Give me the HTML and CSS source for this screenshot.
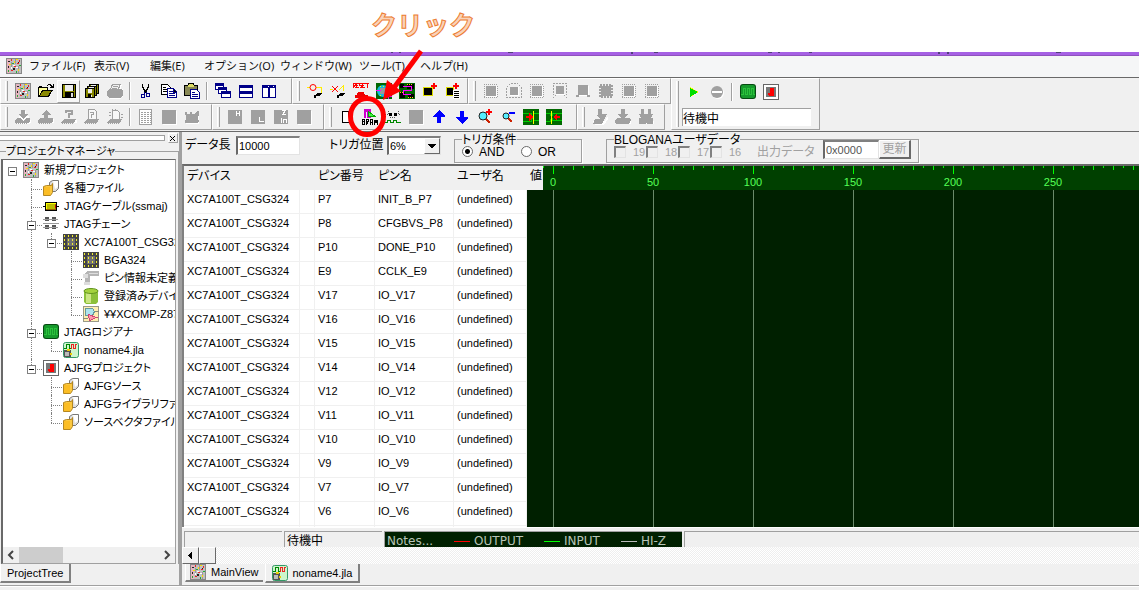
FILE: index.html
```html
<!DOCTYPE html>
<html lang="ja">
<head>
<meta charset="utf-8">
<title>JTAG ロジアナ</title>
<link rel="stylesheet" href="styles.css">
</head>
<body>
<svg class="defs" aria-hidden="true">
  <symbol id="board" viewBox="0 0 16 16"><path fill="#888" d="M0 0h16v16H0z"/><path fill="#c0c0c0" d="M1 1h14v14H1z"/><path fill="#e6b4bf" d="M1 1h3v14H1z"/><path fill="#999" d="M5 4h1v8H5zM9 1h1v5H9zM12 8h1v7h-1z"/><path fill="#e22" d="M5 1h1v2H5zM11 5h2v1h-2zM5 12h2v1H5zM8 8h2v1H8zM13 2h1v2h-1z"/><path fill="#fd0" d="M8 3h1v2H8zM3 6h2v1H3zM12 11h1v2h-1zM10 1h2v1h-2z"/><path fill="#2a3" d="M2 12h1v2H2zM10 13h1v2h-1zM6 5h2v1H6zM13 7h2v1h-2z"/><path fill="#222" d="M2 3h2v1H2zM2 8h1v2H2zM7 10h2v2H7zM12 4h1v1h-1z"/><path fill="#fff" d="M7 7h2v1H7zM10 9h2v1h-2zM5 9h1v2H5z"/></symbol>
  <symbol id="open" viewBox="0 0 16 16"><path fill="#000" d="M0 4h1V3h3v1h6v3h5v1h-1v1h-1v2h-1v2h-1v1H0zM9 2h1V1h3v1h1v1h1V1h1v4h-4V4h1V3h-1V2h-2v1H9z"/><path fill="#ff9" d="M1 5h8v2H4v1H3v2H2v2H1z"/><path fill="#880" d="M5 8h8l-3 5H2z"/></symbol>
  <symbol id="save" viewBox="0 0 16 16"><path fill="#000" d="M1 1h14v14H1z"/><path fill="#880" d="M2 2h12v12H2z"/><path fill="#eee" d="M4 2h8v6H4z"/><path fill="#000" d="M4 9h9v6H4zM12 2h1v6h-1z"/><path fill="#ddd" d="M10 10h2v4h-2z"/></symbol>
  <symbol id="saveall" viewBox="0 0 16 16"><path fill="#000" d="M5 1h10v10H5zM3 3h10v10H3zM1 5h10v10H1z"/><path fill="#880" d="M6 2h1v1H6zM13 2h1v8h-1zM4 4h1v1H4zM11 4h1v8h-1zM2 6h8v8H2z"/><path fill="#eee" d="M7 2h5v1H7zM5 4h5v1H5zM4 6h4v4H4zM7 12h1v2H7z"/><path fill="#000" d="M4 11h3v3H4z"/></symbol>
  <symbol id="print" viewBox="0 0 16 16"><path fill="#fff" d="M5 2h10v1h-1v3h2v8h-2v2H3z"/><path fill="#a0a0a0" d="M5 1h9l-2 5h3l1 2v5l-2 1-1 1H2l-2-2V8l2-2h1z"/><path fill="#f0f0f0" d="M6 2h6l-1 4H4z"/><path fill="#a0a0a0" d="M6 3h5v1H6zM5 5h5v1H5z"/></symbol>
  <symbol id="cut" viewBox="0 0 16 16"><path fill="#000" d="M4 1h1v3h1v2h1v1h1V6h1V4h1V1h1v4h-1v2H9v2H8v1H7V9H6V7H5V5H4z"/><path fill="none" stroke="#008" d="M6.500 9v2.500h-3v3h3v-3M8.500 9v1.500h3v3h-3v-3"/></symbol>
  <symbol id="copy" viewBox="0 0 16 16"><path fill="#fff" stroke="#000" d="M.5 1.500h6l3 3v7h-9z"/><path fill="#fff" stroke="#008" d="M6.500 5.500h6l3 3v6h-9z"/><path stroke="#000" d="M2 4.500h3M2 6.500h4M2 8.500h4"/><path stroke="#008" d="M8 8.500h4M8 10.500h6M8 12.500h6M12.500 6v3h3"/></symbol>
  <symbol id="paste" viewBox="0 0 16 16"><path fill="#000" d="M0 2h4V0h6v2h4v11H0z"/><path fill="#885" d="M1 3h12v9H1z"/><path fill="#dd6" d="M5 1h4v1h1v2H4V2h1z"/><path fill="#fff" stroke="#008" d="M6.500 6.500h6l3 3v6h-9z"/><path stroke="#008" d="M8 9.500h3M8 11.500h6M8 13.500h6"/></symbol>
  <symbol id="cascade" viewBox="0 0 16 16"><path fill="#fff" stroke="#008" d="M.5.5h8v6h-8zM3.500 4.500h8v6h-8zM6.500 8.500h9v6h-9z"/><path fill="#008" d="M0 0h9v3H0zM3 4h9v3H3zM6 8h10v3H6z"/></symbol>
  <symbol id="tileh" viewBox="0 0 16 16"><path fill="#008" d="M1 2h14v13H1z"/><path fill="#fff" d="M2 5h12v3H2zM2 11h12v3H2z"/></symbol>
  <symbol id="tilev" viewBox="0 0 16 16"><path fill="#008" d="M1 2h14v13H1z"/><path fill="#fff" d="M2 5h5v9H2zM9 5h5v9H9zM7 3h1v1H7zM12 3h1v1h-1z"/></symbol>
  <symbol id="probe" viewBox="0 0 16 16"><path fill="none" stroke="#fe0" d="M0 4.500h14v5"/><circle class="soft" cx="6" cy="4.500" r="3" fill="#f4efe8" stroke="#f00"/><path d="M7 13l3-3h5l-3 3zM7 12h2v3H7z"/></symbol>
  <symbol id="unprobe" viewBox="0 0 16 16"><path fill="none" stroke="#fe0" d="M0 6.500h3M9 7l4-4v5"/><path stroke="#f00" d="M2 3l6 6M8 3L2 9"/><path d="M7 13l3-3h5l-3 3zM7 12h2v3H7z"/></symbol>
  <symbol id="reset" viewBox="0 0 16 16"><path fill="none" stroke="#f00" d="M.5 5V.5h2v2h-2M1.500 3l1 2M5.500.5h-2v4h2M4 2.500h1M8.500.5h-2v2h2v2h-2M11.500.5h-2v4h2M10 2.500h1M12 .5h4M14.500 1v4"/><path fill="#e00" d="M5 9h6l1 3h3v3H2v-3h2z"/></symbol>
  <symbol id="chipscan" viewBox="0 0 16 16"><path fill="#060" d="M0 0h16v16H0z"/><circle class="soft" cx="7" cy="8" r="6" fill="#1bd"/><path fill="#999" d="M4 5h6v6H4z"/><path fill="#ff0" d="M4 3h1v1H4zM7 3h1v1H7zM10 3h1v1h-1zM4 12h1v1H4zM8 12h1v1H8z"/><path fill="none" stroke="#f0f" d="M0 7.500h5M12.500 16v-3h3"/></symbol>
  <symbol id="chiproute" viewBox="0 0 16 16"><path fill="#060" d="M0 0h16v16H0z"/><path d="M1 1h4v4H1zM8 1h7v5H8zM1 9h5v6H1zM9 11h6v4H9z"/><path fill="none" stroke="#f0f" d="M4 3.500h8.500v4h-8v4H12"/><path fill="#fd0" d="M8 1h1v1H8zM10 1h1v1h-1zM12 1h1v1h-1zM1 9h1v1H1zM3 9h1v1H3zM9 14h1v1H9zM11 14h1v1h-1zM13 14h1v1h-1z"/></symbol>
  <symbol id="addchip" viewBox="0 0 16 16"><path fill="#dd0" d="M1 4h10v9H1z"/><path d="M2 5h8v7H2z"/><path fill="#f00" d="M11 0h2v2h2v2h-2v2h-2V4H9V2h2z"/></symbol>
  <symbol id="addlist" viewBox="0 0 16 16"><path fill="#dd0" d="M1 4h8v9H1z"/><path d="M2 5h6v7H2z"/><path fill="#f00" d="M10 0h2v2h2v2h-2v2h-2V4H8V2h2z"/><path fill="#fff" d="M8 7h7v9H8z"/><path stroke="#000" d="M9 8.500h5M9 10.500h5M9 12.500h5M9 14.500h5"/></symbol>
  <symbol id="gchip" viewBox="0 0 16 16"><path fill="none" stroke="#fff" d="M3 13.500h11M13.500 3v11"/><path fill="#a0a0a0" d="M3 3h10v10H3z"/><path fill="none" stroke="#a0a0a0" stroke-dasharray="1 1" d="M1 1.500h14M1 14.500h14M1.500 3v11M14.500 3v11"/></symbol>
  <symbol id="gchip2" viewBox="0 0 16 16"><path fill="#a0a0a0" d="M4 4h8v8H4z"/><path fill="none" stroke="#a0a0a0" stroke-dasharray="2 1" d="M4.500.5h7l4 4v10H.5v-10z"/><path fill="none" stroke="#fff" d="M4 12.500h8.500V4"/></symbol>
  <symbol id="gchip3" viewBox="0 0 16 16"><path fill="#a0a0a0" d="M4 3h8v8H4z"/><path fill="none" stroke="#a0a0a0" stroke-dasharray="2 1" d="M1 .5h14M.5 15.500L5 11M1.500 2v10M15.500 15.500L11 11M14.500 2v10"/><path stroke="#fff" d="M4 11.500h9"/></symbol>
  <symbol id="gchip4" viewBox="0 0 16 16"><path fill="#a0a0a0" d="M3 2h10v10H3zM1 12h3v2H1zM12 12h3v2h-3z"/><path stroke="#fff" d="M4 12.500h8M13.500 3v9"/></symbol>
  <symbol id="gchip5" viewBox="0 0 16 16"><path fill="none" stroke="#a0a0a0" stroke-width="2" stroke-dasharray="2 1" d="M2 2h12v12H2z"/><path fill="#a0a0a0" d="M3 3h10v10H3z"/></symbol>
  <symbol id="down" viewBox="0 0 16 16"><path fill="#fff" d="M7 2h4v5h3v1l-3 3h5v3l-2 1H2v-3z"/><path fill="#a0a0a0" d="M6 1h4v4h3L8 10 3 5h3zM2 9h3l3 3 3-3h4v3l-2 2H0v-3z"/><path stroke="#a0a0a0" stroke-dasharray="1 1" d="M1 14.500h12"/></symbol>
  <symbol id="up" viewBox="0 0 16 16"><path fill="#fff" d="M2 10h14v4H2z"/><path fill="#a0a0a0" d="M6 11V6H3l5-5 5 5h-3v5zM2 9h13v3l-2 2H0v-3z"/><path stroke="#a0a0a0" stroke-dasharray="1 1" d="M1 14.500h12"/></symbol>
  <symbol id="ask" viewBox="0 0 16 16"><path fill="#fff" d="M3 11h13v3H3z"/><path fill="none" stroke="#a0a0a0" stroke-width="2" d="M5 4V2h6v3H8v4"/><path fill="#a0a0a0" d="M3 10h12l-2 4H0z"/><path stroke="#a0a0a0" stroke-dasharray="1 1" d="M1 14.500h12"/></symbol>
  <symbol id="askdoc" viewBox="0 0 16 16"><path fill="#f7f7f7" stroke="#a0a0a0" d="M4.500.5h6l2 2v8h-8z"/><path fill="none" stroke="#a0a0a0" d="M6 3.500h3.500v2h-2V9"/><path fill="#a0a0a0" d="M3 10h12l-2 4H0z"/><path stroke="#a0a0a0" stroke-dasharray="1 1" d="M1 14.500h12"/></symbol>
  <symbol id="bug" viewBox="0 0 16 16"><path fill="#f7f7f7" stroke="#a0a0a0" d="M5.500 1.500h5l2 2v7h-7z"/><path stroke="#a0a0a0" d="M2 3.500h2M2 6.500h2M14 5.500h2M14 8.500h2M5 .5h1M8 .5h1"/><path fill="#a0a0a0" d="M3 10h12l-2 4H0z"/><path stroke="#a0a0a0" stroke-dasharray="1 1" d="M1 14.500h12"/></symbol>
  <symbol id="sheet" viewBox="0 0 16 16"><path fill="#fff" stroke="#a0a0a0" d="M1.500.5h12v15h-12z"/><path stroke="#a0a0a0" stroke-dasharray="2 1" d="M3 3.500h10M3 5.500h10M3 7.500h10M3 9.500h10M3 11.500h10M3 13.500h10"/></symbol>
  <symbol id="box" viewBox="0 0 16 16"><path fill="#fff" d="M2 2h14v14H2z"/><path fill="#a0a0a0" d="M1 1h14v14H1z"/></symbol>
  <symbol id="boxh" viewBox="0 0 16 16"><path fill="#a0a0a0" d="M1 1h14v14H1z"/><path fill="none" stroke="#fff" d="M9.500 2v5M12.500 2v5M10 4.500h2"/></symbol>
  <symbol id="boxl" viewBox="0 0 16 16"><path fill="#a0a0a0" d="M1 1h14v14H1z"/><path fill="none" stroke="#fff" d="M9.500 8v4.500h4"/></symbol>
  <symbol id="boxz" viewBox="0 0 16 16"><path fill="#a0a0a0" d="M1 1h14v14H1z"/><path fill="none" stroke="#fff" d="M9 1.500h3.500L9.500 5.500H13M8.500 9v5M10.500 14v-3.500h3V14"/></symbol>
  <symbol id="scrap" viewBox="0 0 16 16"><path fill="#fff" d="M2 5h13v10H2z"/><path fill="#a0a0a0" d="M1 3h2v2h3V3h2v2h2l4-3h1v3l-1 4 1 4-2 1H1l1-6z"/></symbol>
  <symbol id="page" viewBox="0 0 16 16"><path fill="#fff" stroke="#000" d="M3.500 2.500h6l3 3v8h-9z"/><path fill="none" stroke="#000" d="M9.500 3v3h3"/></symbol>
  <symbol id="bram" viewBox="0 0 16 16"><path fill="#c0c" d="M2 0h7v9H2z"/><path fill="#eef" d="M4 3h1v6H4z"/><path fill="#4e4" stroke="#0a0" d="M6.500 2.500L13 7.500H6.500z"/><path fill="none" stroke="#000" d="M.5 16v-5.500h2v2h-2 2v3H.5M4.500 16v-5.500h2v2h-2l2 3M8.500 16v-5.500h2V16M9 13.500h1M12.500 16v-5h1v2h1v-2h1v5"/></symbol>
  <symbol id="wave" viewBox="0 0 16 16"><path d="M4 4h3v3H4zM9 4h3v3H9z"/><path fill="none" stroke="#555" stroke-dasharray="1 1" d="M0 5.500h3V2M13 2v3.500h3M5 8.500h6"/><path fill="none" stroke="#080" d="M0 13.500h2.500v-2h3v2h3v-2h3v2h4.500"/></symbol>
  <symbol id="aup" viewBox="0 0 16 16"><path fill="#00f" d="M8 1l6 6v1h-4v6H6V8H2V7z"/></symbol>
  <symbol id="adown" viewBox="0 0 16 16"><path fill="#00f" d="M8 15L2 9V8h4V2h4v6h4v1z"/></symbol>
  <symbol id="zin" viewBox="0 0 16 16"><path stroke="#c20" stroke-width="2" d="M8 9l5 5"/><circle class="soft" cx="6" cy="7" r="4" fill="#5ef" stroke="#222"/><path fill="#f00" d="M11 0h2v2h2v2h-2v2h-2V4H9V2h2z"/></symbol>
  <symbol id="zout" viewBox="0 0 16 16"><path stroke="#c20" stroke-width="2" d="M8 9l4 4"/><circle class="soft" cx="6" cy="7" r="3" fill="#5ef" stroke="#222"/><path fill="#00f" d="M9 3h6v2H9z"/></symbol>
  <symbol id="gor" viewBox="0 0 16 16"><path fill="#006800" d="M0 0h16v16H0z"/><path fill="none" stroke="#0c0" d="M0 4.500h8l3 7h5M0 12.500h8l3-8h5"/><path fill="#ff0" d="M10 2h1v13h-1z"/><path fill="#f00" d="M3 7h3V4l4 4-4 4V9H3z"/></symbol>
  <symbol id="gol" viewBox="0 0 16 16"><path fill="#006800" d="M0 0h16v16H0z"/><path fill="none" stroke="#0c0" d="M0 4.500h4l3 7h9M0 12.500h4l3-8h9"/><path fill="#ff0" d="M5 2h1v13H5z"/><path fill="#f00" d="M14 7h-3V4L7 8l4 4V9h3z"/></symbol>
  <symbol id="dl1" viewBox="0 0 16 16"><path fill="#fff" d="M1 12h12l3-5v3l-4 6H3z"/><path fill="#a0a0a0" d="M6 0h4v5h5l-4 8-2 2H1l2-5h6L4 6h2z"/></symbol>
  <symbol id="dl2" viewBox="0 0 16 16"><path fill="#fff" d="M2 12h14v3H2z"/><path fill="#a0a0a0" d="M6 0h4v5h3l-3 4h4l2 2-2 4H1l-1-3 2-3h4L3 5h3z"/></symbol>
  <symbol id="dl3" viewBox="0 0 16 16"><path fill="#fff" d="M2 12h14v3H2z"/><path fill="#a0a0a0" d="M3 0h3v5h4V0h3v5h2l-2 4h2v6H9l-1-1-1 1H1V9h2L1 5h2z"/></symbol>
  <symbol id="play" viewBox="0 0 16 16"><path fill="#ff0" d="M4 3v10l9-5z"/><path fill="#0d0" d="M4 4v9l8-5z"/></symbol>
  <symbol id="stop" viewBox="0 0 16 16"><circle class="soft" cx="9" cy="9" r="6" fill="#fff"/><circle class="soft" cx="8" cy="8" r="6" fill="#a0a0a0"/><path fill="#fff" d="M3 7h10v2H3z"/></symbol>
  <symbol id="ana" viewBox="0 0 16 16"><rect class="soft" width="16" height="15" rx="3" fill="#054a10"/><rect class="soft" x="1" y="1" width="14" height="13" rx="2" fill="#169a2c"/><path fill="none" stroke="#2bc23c" d="M1 10.500h2.500v-6h2v6h2v-6h2v6h2v-6h2v6H15"/></symbol>
  <symbol id="ajfg" viewBox="0 0 16 16"><path fill="#fff" stroke="#666" d="M.5.5h15v15H.5z"/><path fill="#777" d="M3 3h10v10H3z"/><path fill="#f00" d="M7 4h4v7l-1 1H6l-1-1V9h2z"/></symbol>
  <symbol id="files" viewBox="0 0 16 16"><g class="soft"><path fill="#ddd" stroke="#777" d="M6.500 2.500l3-2h6v8l-3 3h-6z"/><path fill="#fff" d="M10 1h5v6l-3 2z"/><path fill="#fbc840" stroke="#b58720" d="M.5 6.500l3-1h5l1-2v9l-2 3h-7z"/><path fill="#fbbd25" d="M1 7h6v8H1z"/></g></symbol>
  <symbol id="cable" viewBox="0 0 16 16"><path stroke="#000" d="M0 8.500h16"/><path fill="#960" stroke="#000" d="M2.500 4.500h11v8h-11z"/><path fill="#bb0" d="M4 6h8v5H4z"/><path fill="#ff0" d="M3 5h10v1H3zM3 6h1v5H3z"/><path fill="#c00" d="M12 7h1v3h-1z"/></symbol>
  <symbol id="chain" viewBox="0 0 16 16"><path fill="#555" d="M2 1h4v4H2zM9 1h4v4H9zM2 9h4v4H2zM9 9h4v4H9z"/><path fill="none" stroke="#999" d="M0 3.500h15M0 7.500h15.500M0 11.500h15"/></symbol>
  <symbol id="bga" viewBox="0 0 16 16"><path fill="#444" d="M0 0h16v16H0z"/><path fill="#707070" d="M4 4h8v8H4z"/><path fill="#f2ee30" d="M1 1h1v2H1zM5 1h1v2H5zM9 1h1v2H9zM13 1h1v2h-1zM1 5h1v2H1zM5 5h1v2H5zM9 5h1v2H9zM13 5h1v2h-1zM1 9h1v2H1zM5 9h1v2H5zM9 9h1v2H9zM13 9h1v2h-1zM1 13h1v2H1zM5 13h1v2H5zM9 13h1v2H9zM13 13h1v2h-1z"/></symbol>
  <symbol id="pin" viewBox="0 0 16 16"><path fill="#b5b5b5" d="M2 3l2-2h12v5H7v8H2z"/><path fill="#ddd" d="M0 4h5v4H0zM1 12h6v3H1zM6 3h9v1H6z"/></symbol>
  <symbol id="db" viewBox="0 0 16 16"><g class="soft"><path fill="#8cc03a" d="M1 2h14v12l-2 2H3l-2-2z"/><path fill="#cbe584" d="M3 4h5v11H3z"/><ellipse cx="8" cy="3" rx="7" ry="2.500" fill="#a4d23e" stroke="#639420"/></g></symbol>
  <symbol id="share" viewBox="0 0 16 16"><path fill="#ffeeb0" stroke="#998" d="M.5.5h15v15H.5z"/><path fill="#aee4ef" stroke="#699" d="M2.500 2.500h7l2 3-2 4h-7z"/><path fill="#f9a" stroke="#c47" d="M5.500 8.500l8 3-7 3z"/><path fill="none" stroke="#887" d="M12 5.500h4M0 12.500h5"/></symbol>
  <symbol id="jla" viewBox="0 0 16 16"><rect class="soft" x=".5" y=".5" width="15" height="15" rx="2" fill="#cdf5cc" stroke="#396"/><path fill="none" stroke="#080" d="M1 6.500h2v-4h3v4h2"/><path fill="none" stroke="#e22" d="M8 6.500v-4h2v4h2v-4h2"/><path fill="#555" d="M1 8h7v7H1z"/><path fill="#bbb" d="M2 10h4v4H2z"/><path fill="#ec0" d="M4 7h3v2H4zM7 11h2v2H7z"/></symbol>
</svg>

<header class="lead">
  <strong class="callout">クリック</strong>
</header>

<div class="app">
  <svg class="titlebar" aria-hidden="true"><path fill="#50407a" d="M391 0h2v1h-2zM399 0h2v1h-2zM508 0h5v1h-5zM631 0h2v2h-2zM654 0h4v1h-4zM768 0h4v1h-4zM778 0h2v1h-2zM809 0h3v1h-3zM938 0h2v2h-2zM947 0h2v2h-2zM1056 0h5v1h-5z"/></svg>
  <nav class="menubar">
    <svg class="ic"><use href="#board"/></svg>
    <a href="#">ファイル(F)</a><a href="#">表示(V)</a><a href="#">編集(E)</a><a href="#">オプション(O)</a><a href="#">ウィンドウ(W)</a><a href="#">ツール(T)</a><a href="#">ヘルプ(H)</a>
  </nav>

  <div class="toolbars">
    <div class="rows">
      <div class="row">
        <div class="group g-file">
          <button aria-label="新規"><svg class="ic"><use href="#board"/></svg></button><button aria-label="開く"><svg class="ic"><use href="#open"/></svg></button><button class="hot" aria-label="保存"><svg class="ic"><use href="#save"/></svg></button><button aria-label="全て保存"><svg class="ic"><use href="#saveall"/></svg></button><button aria-label="印刷"><svg class="ic"><use href="#print"/></svg></button><i class="sep"></i><button aria-label="切り取り"><svg class="ic"><use href="#cut"/></svg></button><button aria-label="コピー"><svg class="ic"><use href="#copy"/></svg></button><button aria-label="貼り付け"><svg class="ic"><use href="#paste"/></svg></button><i class="sep"></i><button aria-label="重ねて表示"><svg class="ic"><use href="#cascade"/></svg></button><button aria-label="上下に表示"><svg class="ic"><use href="#tileh"/></svg></button><button aria-label="左右に表示"><svg class="ic"><use href="#tilev"/></svg></button>
        </div>
        <div class="group g-chain">
          <button aria-label="接続"><svg class="ic"><use href="#probe"/></svg></button><button aria-label="切断"><svg class="ic"><use href="#unprobe"/></svg></button><button aria-label="リセット"><svg class="ic"><use href="#reset"/></svg></button><button aria-label="検出"><svg class="ic"><use href="#chipscan"/></svg></button><button aria-label="配線"><svg class="ic"><use href="#chiproute"/></svg></button><button aria-label="追加"><svg class="ic"><use href="#addchip"/></svg></button><button aria-label="一覧に追加"><svg class="ic"><use href="#addlist"/></svg></button>
        </div>
        <div class="group g-mode">
          <button aria-label="モード1"><svg class="ic"><use href="#gchip"/></svg></button><button aria-label="モード2"><svg class="ic"><use href="#gchip2"/></svg></button><button aria-label="モード3"><svg class="ic"><use href="#gchip"/></svg></button><button aria-label="モード4"><svg class="ic"><use href="#gchip3"/></svg></button><button aria-label="モード5"><svg class="ic"><use href="#gchip4"/></svg></button><button aria-label="モード6"><svg class="ic"><use href="#gchip5"/></svg></button><button aria-label="モード7"><svg class="ic"><use href="#gchip"/></svg></button><button aria-label="モード8"><svg class="ic"><use href="#gchip"/></svg></button>
        </div>
      </div>
      <div class="row">
        <div class="group g-dev">
          <button aria-label="書き込み"><svg class="ic"><use href="#down"/></svg></button><button aria-label="読み出し"><svg class="ic"><use href="#up"/></svg></button><button aria-label="照会"><svg class="ic"><use href="#ask"/></svg></button><button aria-label="ファイル照会"><svg class="ic"><use href="#askdoc"/></svg></button><button aria-label="デバッグ"><svg class="ic"><use href="#bug"/></svg></button><i class="sep"></i><button aria-label="シート"><svg class="ic"><use href="#sheet"/></svg></button><button aria-label="デバイス"><svg class="ic"><use href="#box"/></svg></button><button aria-label="消去"><svg class="ic"><use href="#scrap"/></svg></button>
        </div>
        <div class="group g-level">
          <button aria-label="H"><svg class="ic"><use href="#boxh"/></svg></button><button aria-label="L"><svg class="ic"><use href="#boxl"/></svg></button><button aria-label="Z"><svg class="ic"><use href="#boxz"/></svg></button><button aria-label="なし"><svg class="ic"><use href="#box"/></svg></button>
        </div>
        <div class="group g-wave">
          <button aria-label="新規波形"><svg class="ic"><use href="#page"/></svg></button><button aria-label="BRAM"><svg class="ic"><use href="#bram"/></svg></button><button aria-label="波形"><svg class="ic"><use href="#wave"/></svg></button><button aria-label="停止"><svg class="ic"><use href="#box"/></svg></button><button aria-label="上へ"><svg class="ic"><use href="#aup"/></svg></button><button aria-label="下へ"><svg class="ic"><use href="#adown"/></svg></button><button aria-label="拡大"><svg class="ic"><use href="#zin"/></svg></button><button aria-label="縮小"><svg class="ic"><use href="#zout"/></svg></button><button aria-label="次へ"><svg class="ic"><use href="#gor"/></svg></button><button aria-label="前へ"><svg class="ic"><use href="#gol"/></svg></button>
        </div>
        <div class="group g-load">
          <button aria-label="ロード1"><svg class="ic"><use href="#dl1"/></svg></button><button aria-label="ロード2"><svg class="ic"><use href="#dl2"/></svg></button><button aria-label="ロード3"><svg class="ic"><use href="#dl3"/></svg></button>
        </div>
      </div>
    </div>
    <div class="group g-run">
      <div>
        <div class="runrow"><button aria-label="実行"><svg class="ic"><use href="#play"/></svg></button><button aria-label="中止"><svg class="ic"><use href="#stop"/></svg></button><i class="sep"></i><button aria-label="ロジアナ"><svg class="ic"><use href="#ana"/></svg></button><button aria-label="AJFG"><svg class="ic"><use href="#ajfg"/></svg></button></div>
        <input class="state" aria-label="状態" value="待機中">
      </div>
    </div>
  </div>

  <div class="work">
    <aside class="side">
      <div class="grip"><i></i><button aria-label="閉じる"><svg viewBox="0 0 7 7"><path stroke="#000" d="M1 1l5 5M6 1L1 6"/></svg></button></div>
      <fieldset class="panel">
        <legend>プロジェクトマネージャ</legend>
        <div class="treebox">
          <div class="tree">
            <div class="node top"><b></b><svg class="ic"><use href="#board"/></svg><span>新規プロジェクト</span></div>
            <ul>
              <li><div class="node"><svg class="ic"><use href="#files"/></svg><span>各種ファイル</span></div></li>
              <li><div class="node"><svg class="ic"><use href="#cable"/></svg><span>JTAGケーブル(ssmaj)</span></div></li>
              <li><div class="node"><b></b><svg class="ic"><use href="#chain"/></svg><span>JTAGチェーン</span></div>
                <ul>
                  <li><div class="node"><b></b><svg class="ic"><use href="#bga"/></svg><span>XC7A100T_CSG324</span></div>
                    <ul>
                      <li><div class="node"><svg class="ic"><use href="#bga"/></svg><span>BGA324</span></div></li>
                      <li><div class="node"><svg class="ic"><use href="#pin"/></svg><span>ピン情報未定義</span></div></li>
                      <li><div class="node"><svg class="ic"><use href="#db"/></svg><span>登録済みデバイス</span></div></li>
                      <li><div class="node"><svg class="ic"><use href="#share"/></svg><span>¥¥XCOMP-Z87M</span></div></li>
                    </ul>
                  </li>
                </ul>
              </li>
              <li><div class="node"><b></b><svg class="ic"><use href="#ana"/></svg><span>JTAGロジアナ</span></div>
                <ul><li><div class="node"><svg class="ic"><use href="#jla"/></svg><span>noname4.jla</span></div></li></ul>
              </li>
              <li><div class="node"><b></b><svg class="ic"><use href="#ajfg"/></svg><span>AJFGプロジェクト</span></div>
                <ul>
                  <li><div class="node"><svg class="ic"><use href="#files"/></svg><span>AJFGソース</span></div></li>
                  <li><div class="node"><svg class="ic"><use href="#files"/></svg><span>AJFGライブラリファイル</span></div></li>
                  <li><div class="node"><svg class="ic"><use href="#files"/></svg><span>ソースベクタファイル</span></div></li>
                </ul>
              </li>
            </ul>
          </div>
          <div class="hbar"><svg viewBox="0 0 16 16"><path d="M10 4L6 8l4 4"/></svg><i></i><svg viewBox="0 0 16 16"><path d="M6 4l4 4-4 4"/></svg></div>
        </div>
      </fieldset>
      <div class="tabs"><button class="tab">ProjectTree</button></div>
    </aside>

    <main class="main">
      <form class="params">
        <label for="len">データ長</label><input id="len" class="sunken len" value="10000">
        <label for="pos" class="pos">トリガ位置</label>
        <span class="combo"><select id="pos" class="sunken"><option>6%</option></select><svg viewBox="0 0 16 16" aria-hidden="true"><path d="M3 6h10l-5 5z"/></svg></span>
        <fieldset class="box trig"><legend>トリガ条件</legend><label><input type="radio" name="t" checked>AND</label><label><input type="radio" name="t">OR</label></fieldset>
        <fieldset class="box user"><legend>BLOGANAユーザデータ</legend>
          <label><input type="checkbox" disabled>19</label><label><input type="checkbox" disabled>18</label><label><input type="checkbox" disabled>17</label><label><input type="checkbox" disabled>16</label>
          <label class="out" for="out">出力データ</label><input id="out" class="sunken" value="0x0000" disabled><button type="button" disabled>更新</button>
        </fieldset>
      </form>
      <div class="signals">
        <table>
          <colgroup><col class="c1"><col class="c2"><col class="c3"><col class="c4"><col class="c5"><col class="c6"></colgroup>
          <thead><tr><th>デバイス</th><th></th><th>ピン番号</th><th>ピン名</th><th>ユーザ名</th><th>値</th></tr></thead>
          <tbody>
            <tr><td>XC7A100T_CSG324</td><td></td><td>P7</td><td>INIT_B_P7</td><td>(undefined)</td><td></td></tr>
            <tr><td>XC7A100T_CSG324</td><td></td><td>P8</td><td>CFGBVS_P8</td><td>(undefined)</td><td></td></tr>
            <tr><td>XC7A100T_CSG324</td><td></td><td>P10</td><td>DONE_P10</td><td>(undefined)</td><td></td></tr>
            <tr><td>XC7A100T_CSG324</td><td></td><td>E9</td><td>CCLK_E9</td><td>(undefined)</td><td></td></tr>
            <tr><td>XC7A100T_CSG324</td><td></td><td>V17</td><td>IO_V17</td><td>(undefined)</td><td></td></tr>
            <tr><td>XC7A100T_CSG324</td><td></td><td>V16</td><td>IO_V16</td><td>(undefined)</td><td></td></tr>
            <tr><td>XC7A100T_CSG324</td><td></td><td>V15</td><td>IO_V15</td><td>(undefined)</td><td></td></tr>
            <tr><td>XC7A100T_CSG324</td><td></td><td>V14</td><td>IO_V14</td><td>(undefined)</td><td></td></tr>
            <tr><td>XC7A100T_CSG324</td><td></td><td>V12</td><td>IO_V12</td><td>(undefined)</td><td></td></tr>
            <tr><td>XC7A100T_CSG324</td><td></td><td>V11</td><td>IO_V11</td><td>(undefined)</td><td></td></tr>
            <tr><td>XC7A100T_CSG324</td><td></td><td>V10</td><td>IO_V10</td><td>(undefined)</td><td></td></tr>
            <tr><td>XC7A100T_CSG324</td><td></td><td>V9</td><td>IO_V9</td><td>(undefined)</td><td></td></tr>
            <tr><td>XC7A100T_CSG324</td><td></td><td>V7</td><td>IO_V7</td><td>(undefined)</td><td></td></tr>
            <tr><td>XC7A100T_CSG324</td><td></td><td>V6</td><td>IO_V6</td><td>(undefined)</td><td></td></tr>
            <tr><td></td><td></td><td></td><td></td><td></td><td></td></tr>
          </tbody>
        </table>
        <div class="scope">
          <div class="ruler"><span>0</span><span>50</span><span>100</span><span>150</span><span>200</span><span>250</span></div>
          <div class="plot"></div>
        </div>
      </div>
      <div class="status">
        <span class="cell"></span><span class="cell">待機中</span>
        <span class="cell notes"><span>Notes...</span><span class="key">OUTPUT</span><span class="key in">INPUT</span><span class="key hiz">HI-Z</span></span>
        <span class="cell rest"></span>
      </div>
      <div class="scroll"><button aria-label="左へ"><svg viewBox="0 0 16 16"><path d="M10 4v8L5 8z"/></svg></button><i></i></div>
      <div class="tabs"><button class="tab flat"><svg class="ic"><use href="#board"/></svg>MainView</button><button class="tab"><svg class="ic"><use href="#jla"/></svg>noname4.jla</button></div>
    </main>
  </div>
  <footer></footer>
</div>

<svg class="mark" viewBox="0 0 80 92" aria-hidden="true"><ellipse cx="22" cy="68.500" rx="16.500" ry="18" fill="none" stroke="#f00" stroke-width="5"/><path stroke="#f00" stroke-width="5" d="M76 3L48 41"/><path fill="#f00" d="M38 52l4-20 14 11z"/></svg>
</body>
</html>
```
FILE: styles.css
```css
*, *::before, *::after { box-sizing: border-box; }
body {
  margin: 0;
  height: 100vh;
  display: flex;
  flex-direction: column;
  background: #fff;
  color: #000;
  font: 12px/16px "Liberation Sans", "Noto Sans CJK JP", sans-serif;
  font-feature-settings: "palt";
  overflow: hidden;
}
.defs { position: absolute; width: 0; height: 0; }
svg { shape-rendering: crispEdges; display: block; }
.soft { shape-rendering: auto; }
.ic { width: 16px; height: 16px; flex: none; }
button, input, select { font: inherit; font-feature-settings: inherit; color: inherit; margin: 0; padding: 0; border: 0; border-radius: 0; background: none; }
fieldset { margin: 0; padding: 0; border: 0; min-width: 0; }

.lead { flex: none; height: 52px; padding: 5px 0 0 371px; }
.callout {
  font: 700 26px/38px "Noto Sans CJK JP", sans-serif;
  color: #f9d3ba;
  -webkit-text-stroke: 1px #ed7d31;
}
.mark { position: absolute; left: 345px; top: 48px; width: 80px; height: 92px; shape-rendering: auto; }

.app { flex: 1; display: flex; flex-direction: column; background: #f0f0f0; min-height: 0; }
.titlebar { flex: none; width: 100%; height: 4px; background: #a560e4; border-bottom: 1px solid #8f52bd; }
.menubar {
  flex: none;
  height: 21px;
  display: grid;
  grid-template-columns: 23px 65px 56px 54px 76px 79px 61px 60px;
  align-items: center;
  padding: 0 0 2px 6px;
  background: #f5f6f7;
  font: 11px/18px "Noto Sans", "Noto Sans CJK JP", sans-serif;
}
.menubar a { color: #111; text-decoration: none; white-space: nowrap; }

.toolbars { flex: none; display: flex; align-items: flex-start; border-top: 1px solid #696969; border-bottom: 1px solid #696969; height: 55px; }
.rows { display: flex; flex-direction: column; }
.row { display: flex; height: 26px; }
.group {
  display: flex;
  align-items: center;
  padding-left: 4px;
  border: 1px solid #a0a0a0;
  border-left-color: #fff;
  border-top-color: #fff;
}
.group::before {
  content: "";
  width: 3px;
  margin: 2px 3px 2px 0;
  align-self: stretch;
  border-left: 1px solid #fff;
  border-right: 1px solid #a0a0a0;
}
.g-file { width: 292px; } .g-chain { width: 176px; } .g-mode { width: 203px; }
.g-dev { width: 212px; } .g-level { width: 112px; } .g-wave { width: 253px; } .g-load { width: 88px; }
.g-run { width: 149px; height: 52px; align-items: flex-start; }
.group button { width: 23px; height: 23px; display: grid; place-items: center; flex: none; }
.group button.hot { border: 1px solid #a0a0a0; border-left-color: #fff; border-top-color: #fff; background: #f6f6f6; }
.sep { width: 2px; height: 18px; margin: 0 3px; border-left: 1px solid #a0a0a0; border-right: 1px solid #fff; }
.runrow { display: flex; align-items: center; height: 25px; margin-bottom: 4px; }
.state { display: block; width: 129px; height: 18px; background: #fff; border-top: 1px solid #a0a0a0; border-left: 1px solid #a0a0a0; }

.work { flex: 1; display: flex; min-height: 0; }
.side { width: 182px; display: flex; flex-direction: column; flex: none; border-right: 3px solid #a0a0a0; }
.grip { flex: none; display: flex; gap: 3px; align-items: center; height: 12px; padding-right: 1px; }
.grip i { flex: 1; height: 6px; border: 1px solid #a0a0a0; border-left-width: 0; background: #fff; }
.grip button { width: 10px; height: 10px; border: 1px solid #a0a0a0; border-left-color: #fff; border-top-color: #fff; }
.grip svg { width: 7px; height: 7px; }
.panel {
  flex: 1;
  min-height: 0;
  border-top: 1px solid #a0a0a0;
  border-right: 1px solid #a0a0a0;
}
.panel legend { padding: 0; margin-left: 6px; font-size: 11px; line-height: 15px; }
.treebox {
  width: 175px;
  height: 100%;
  display: flex;
  flex-direction: column;
  background: #fff;
  border: 1px solid #a0a0a0;
  border-left: 2px solid #696969;
  border-top-color: #696969;
  margin-left: 1px;
}
.tree { flex: 1; min-height: 0; overflow: hidden; padding: 1px 0 0 4px; font-size: 11px; }
.tree ul { margin: 0 0 0 24px; padding: 0; list-style: none; position: relative; }
.tree ul ul { margin-left: 20px; }
.tree li { position: relative; }
.tree li::before { content: ""; position: absolute; left: 0; top: 0; bottom: 0; border-left: 1px dotted #808080; }
.tree li:last-child::before { bottom: auto; height: 10px; }
.tree li::after { content: ""; position: absolute; left: 0; top: 10px; width: 11px; border-top: 1px dotted #808080; }
.node { height: 18px; display: flex; align-items: center; padding-left: 12px; white-space: nowrap; }
.node span { margin-left: 5px; }
.node.top { padding-left: 16px; position: relative; }
.node b { position: absolute; z-index: 1; left: -4px; top: 6px; width: 9px; height: 9px; background: linear-gradient(#000, #000) center / 5px 1px no-repeat #fff; border: 1px solid #808080; }
.node.top b { left: 1px; }
.hbar { flex: none; height: 16px; display: flex; background: #f0f0f0; }
.hbar svg { width: 16px; fill: none; stroke: #444; stroke-width: 2; shape-rendering: auto; }
.hbar i { width: 44px; margin-right: auto; background: #cdcdcd; }

.tabs { flex: none; height: 21px; display: flex; gap: 2px; align-items: flex-start; }
.tab {
  height: 19px;
  display: flex;
  align-items: center;
  gap: 5px;
  padding: 0 6px;
  font: 11px/16px "Liberation Sans", sans-serif;
  border: 1px solid #808080;
  border-width: 0 2px 2px 1px;
  border-left-color: #fff;
  white-space: nowrap;
}
.tab.flat { height: 18px; padding: 0 4px; border-right-width: 0; }

.main { flex: 1; min-width: 0; display: flex; flex-direction: column; }
.params { flex: none; height: 32px; display: flex; padding: 4px 0 0 3px; white-space: nowrap; align-items: flex-start; }
.params > label { line-height: 19px; width: 51px; }
.params > .pos { width: 58px; margin-left: 29px; }
.sunken { height: 19px; background: #fff; border: 1px solid #e3e3e3; border-left: 2px solid #696969; border-top: 2px solid #808080; padding-left: 1px; font-size: 11px; }
.len { width: 64px; }
.combo { position: relative; width: 54px; margin-right: 13px; }
.combo select { width: 100%; appearance: none; }
.combo svg { position: absolute; right: 1px; top: 2px; width: 16px; height: 16px; background: #f0f0f0; border: 1px solid #696969; border-left-color: #fff; border-top-color: #fff; pointer-events: none; }
.box { border: 1px solid #a0a0a0; height: 28px; display: flex; box-shadow: 1px 1px #fff; margin-top: -1px; }
.box legend { padding: 0; height: 9px; line-height: 11px; }
.trig { width: 128px; padding-left: 7px; }
.box label { display: flex; align-items: center; height: 15px; }
.trig label { width: 59px; gap: 6px; }
.trig input { appearance: none; width: 11px; height: 11px; border-radius: 50%; border: 1px solid #696969; background: #fff; }
.trig input:checked { background: radial-gradient(circle, #000 2px, #fff 3px); }
.user { width: 313px; margin-left: 24px; padding-left: 7px; color: #a0a0a0; }
.user legend { color: #000; }
.user label { width: 32px; gap: 7px; font-size: 11px; flex: none; }
.user label input { appearance: none; width: 12px; height: 12px; border: 1px solid #e3e3e3; border-left: 2px solid #808080; border-top: 2px solid #808080; }
.user .out { margin-left: 15px; width: 66px; font-size: 12px; }
.user .sunken { width: 56px; color: #555; margin-top: -4px; }
.user button { width: 32px; height: 19px; margin-top: -4px; border: 1px solid #696969; border-width: 1px 2px 2px 1px; border-left-color: #fff; border-top-color: #fff; }

.signals { flex: 1; min-height: 0; display: flex; overflow: hidden; border-top: 2px solid #696969; border-left: 2px solid #808080; }
table { flex: none; width: 359px; table-layout: fixed; border-collapse: separate; border-spacing: 0; align-self: flex-start; }
.c1 { width: 116px; } .c2 { width: 15px; } .c3 { width: 60px; } .c4 { width: 79px; } .c5 { width: 73px; } .c6 { width: 16px; }
th, td { height: 24px; padding: 1px 0 0 3px; text-align: left; vertical-align: top; font-weight: normal; white-space: nowrap; }
th { padding-top: 2px; }
td { background: #fff; border-right: 1px solid #f0f0f0; border-bottom: 1px solid #f0f0f0; font-size: 11px; }
td:last-child { background: #002000; border: 0; }
.scope { flex: 1; min-width: 0; display: flex; flex-direction: column; }
.ruler {
  flex: none;
  height: 24px;
  display: flex;
  overflow: hidden;
  padding-top: 8px;
  color: #5f5;
  font-size: 11px;
  background:
    repeating-linear-gradient(90deg, #0f0 0 1px, transparent 1px 100px) 10px 0 / 2000px 8px repeat-x,
    repeating-linear-gradient(90deg, #0f0 0 1px, transparent 1px 20px) 10px 0 / 2000px 4px repeat-x,
    repeating-linear-gradient(90deg, #0f0 0 1px, transparent 1px 10px) 0 0 / 2000px 2px repeat-x,
    #004000;
}
.ruler span { flex: 0 0 100px; text-align: center; }
.ruler span:first-child { margin-left: -40px; }
.plot { flex: 1; background: repeating-linear-gradient(90deg, #6a8a6a 0 1px, transparent 1px 100px) 10px 0 / 2000px 100%, #002000; }

.status { flex: none; height: 20px; padding: 3px 0 0 2px; display: flex; gap: 2px; overflow: hidden; border-top: 1px solid #fff; }
.cell { flex: none; height: 20px; width: 98px; border-top: 1px solid #a0a0a0; border-left: 1px solid #a0a0a0; padding: 1px 2px; line-height: 17px; }
.notes { width: 298px; display: flex; background: #002000; color: #b8c4b8; font-family: "DejaVu Sans", sans-serif; }
.notes .key { display: flex; align-items: center; gap: 4px; margin-left: 21px; height: 17px; }
.key::before { content: ""; flex: none; width: 16px; height: 1px; background: #f00; }
.key.in::before { background: #0f0; }
.key.hiz::before { background: #bbb; }
.cell.rest { flex: 1; }
.scroll { flex: none; height: 17px; display: flex; background: repeating-conic-gradient(#fff 0 25%, #eee 0 50%) 0 0 / 2px 2px; }
.scroll button, .scroll i { width: 17px; border: 1px solid #696969; border-left-color: #fff; border-top-color: #fff; background: #f0f0f0; }
.scroll svg { width: 15px; height: 15px; }
.main .tabs { padding-left: 3px; }
footer { flex: none; height: 5px; border-top: 1px solid #a0a0a0; box-shadow: inset 0 1px #fff; }
```
